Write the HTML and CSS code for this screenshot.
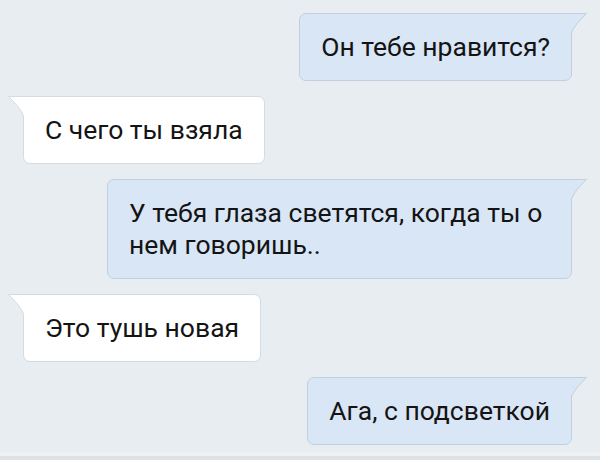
FILE: index.html
```html
<!DOCTYPE html>
<html lang="ru">
<head>
    <meta charset="utf-8">
    <title>Диалог</title>
    <link rel="stylesheet" href="styles.css">
</head>
<body>
    <div class="chat">
        <div class="msg out">
            <div class="bubble">
                Он тебе нравится?
                <svg class="tail" width="18" height="22" viewBox="0 0 18 22"><path class="tail-fill" d="M0 0.5 H16.5 C10 7 4 13 1 21 H0 Z"/><path class="tail-line" d="M0 0.5 H16.5 C10 7 4 13 1 21"/></svg>
            </div>
        </div>
        <div class="msg in">
            <div class="bubble">
                С чего ты взяла
                <svg class="tail" width="18" height="22" viewBox="0 0 18 22"><path class="tail-fill" d="M0 0.5 H16.5 C10 7 4 13 1 21 H0 Z"/><path class="tail-line" d="M0 0.5 H16.5 C10 7 4 13 1 21"/></svg>
            </div>
        </div>
        <div class="msg out">
            <div class="bubble">
                У тебя глаза светятся, когда ты о нем говоришь..
                <svg class="tail" width="18" height="22" viewBox="0 0 18 22"><path class="tail-fill" d="M0 0.5 H16.5 C10 7 4 13 1 21 H0 Z"/><path class="tail-line" d="M0 0.5 H16.5 C10 7 4 13 1 21"/></svg>
            </div>
        </div>
        <div class="msg in">
            <div class="bubble">
                Это тушь новая
                <svg class="tail" width="18" height="22" viewBox="0 0 18 22"><path class="tail-fill" d="M0 0.5 H16.5 C10 7 4 13 1 21 H0 Z"/><path class="tail-line" d="M0 0.5 H16.5 C10 7 4 13 1 21"/></svg>
            </div>
        </div>
        <div class="msg out">
            <div class="bubble">
                Ага, с подсветкой
                <svg class="tail" width="18" height="22" viewBox="0 0 18 22"><path class="tail-fill" d="M0 0.5 H16.5 C10 7 4 13 1 21 H0 Z"/><path class="tail-line" d="M0 0.5 H16.5 C10 7 4 13 1 21"/></svg>
            </div>
        </div>
    </div>
</body>
</html>
```

FILE: styles.css
```css
html {
    background: linear-gradient(to bottom, #e8edf1 0, #e8edf1 452px, #eef1f4 452px, #eef1f4 456px, #dde2e6 456px);
    min-height: 460px;
}
body {
    margin: 0;
    padding: 0;
    font-family: Roboto, "Noto Sans", sans-serif;
    color: #141414;
}
.chat {
    display: flex;
    flex-direction: column;
    gap: 15px;
    padding: 13px 28px 0 23px;
}
.msg {
    display: flex;
}
.msg.out {
    justify-content: flex-end;
}
.msg.in {
    justify-content: flex-start;
}
.bubble {
    position: relative;
    max-width: 465px;
    box-sizing: border-box;
    padding: 17px 21px;
    font-size: 26.5px;
    line-height: 32px;
    border: 1px solid #c3cfdd;
    border-radius: 7px;
}
.out .bubble {
    background: #d9e6f6;
    border-top-right-radius: 0;
}
.in .bubble {
    background: #ffffff;
    border-color: #d5dbe2;
    border-top-left-radius: 0;
}
.tail {
    position: absolute;
    top: -1px;
}
.out .tail {
    left: calc(100% - 1px);
}
.in .tail {
    right: calc(100% - 1px);
    transform: scaleX(-1);
}
.tail-fill {
    stroke: none;
}
.out .tail-fill {
    fill: #d9e6f6;
}
.in .tail-fill {
    fill: #ffffff;
}
.tail-line {
    fill: none;
    stroke-width: 1;
}
.out .tail-line {
    stroke: #c3cfdd;
}
.in .tail-line {
    stroke: #d5dbe2;
}
```
